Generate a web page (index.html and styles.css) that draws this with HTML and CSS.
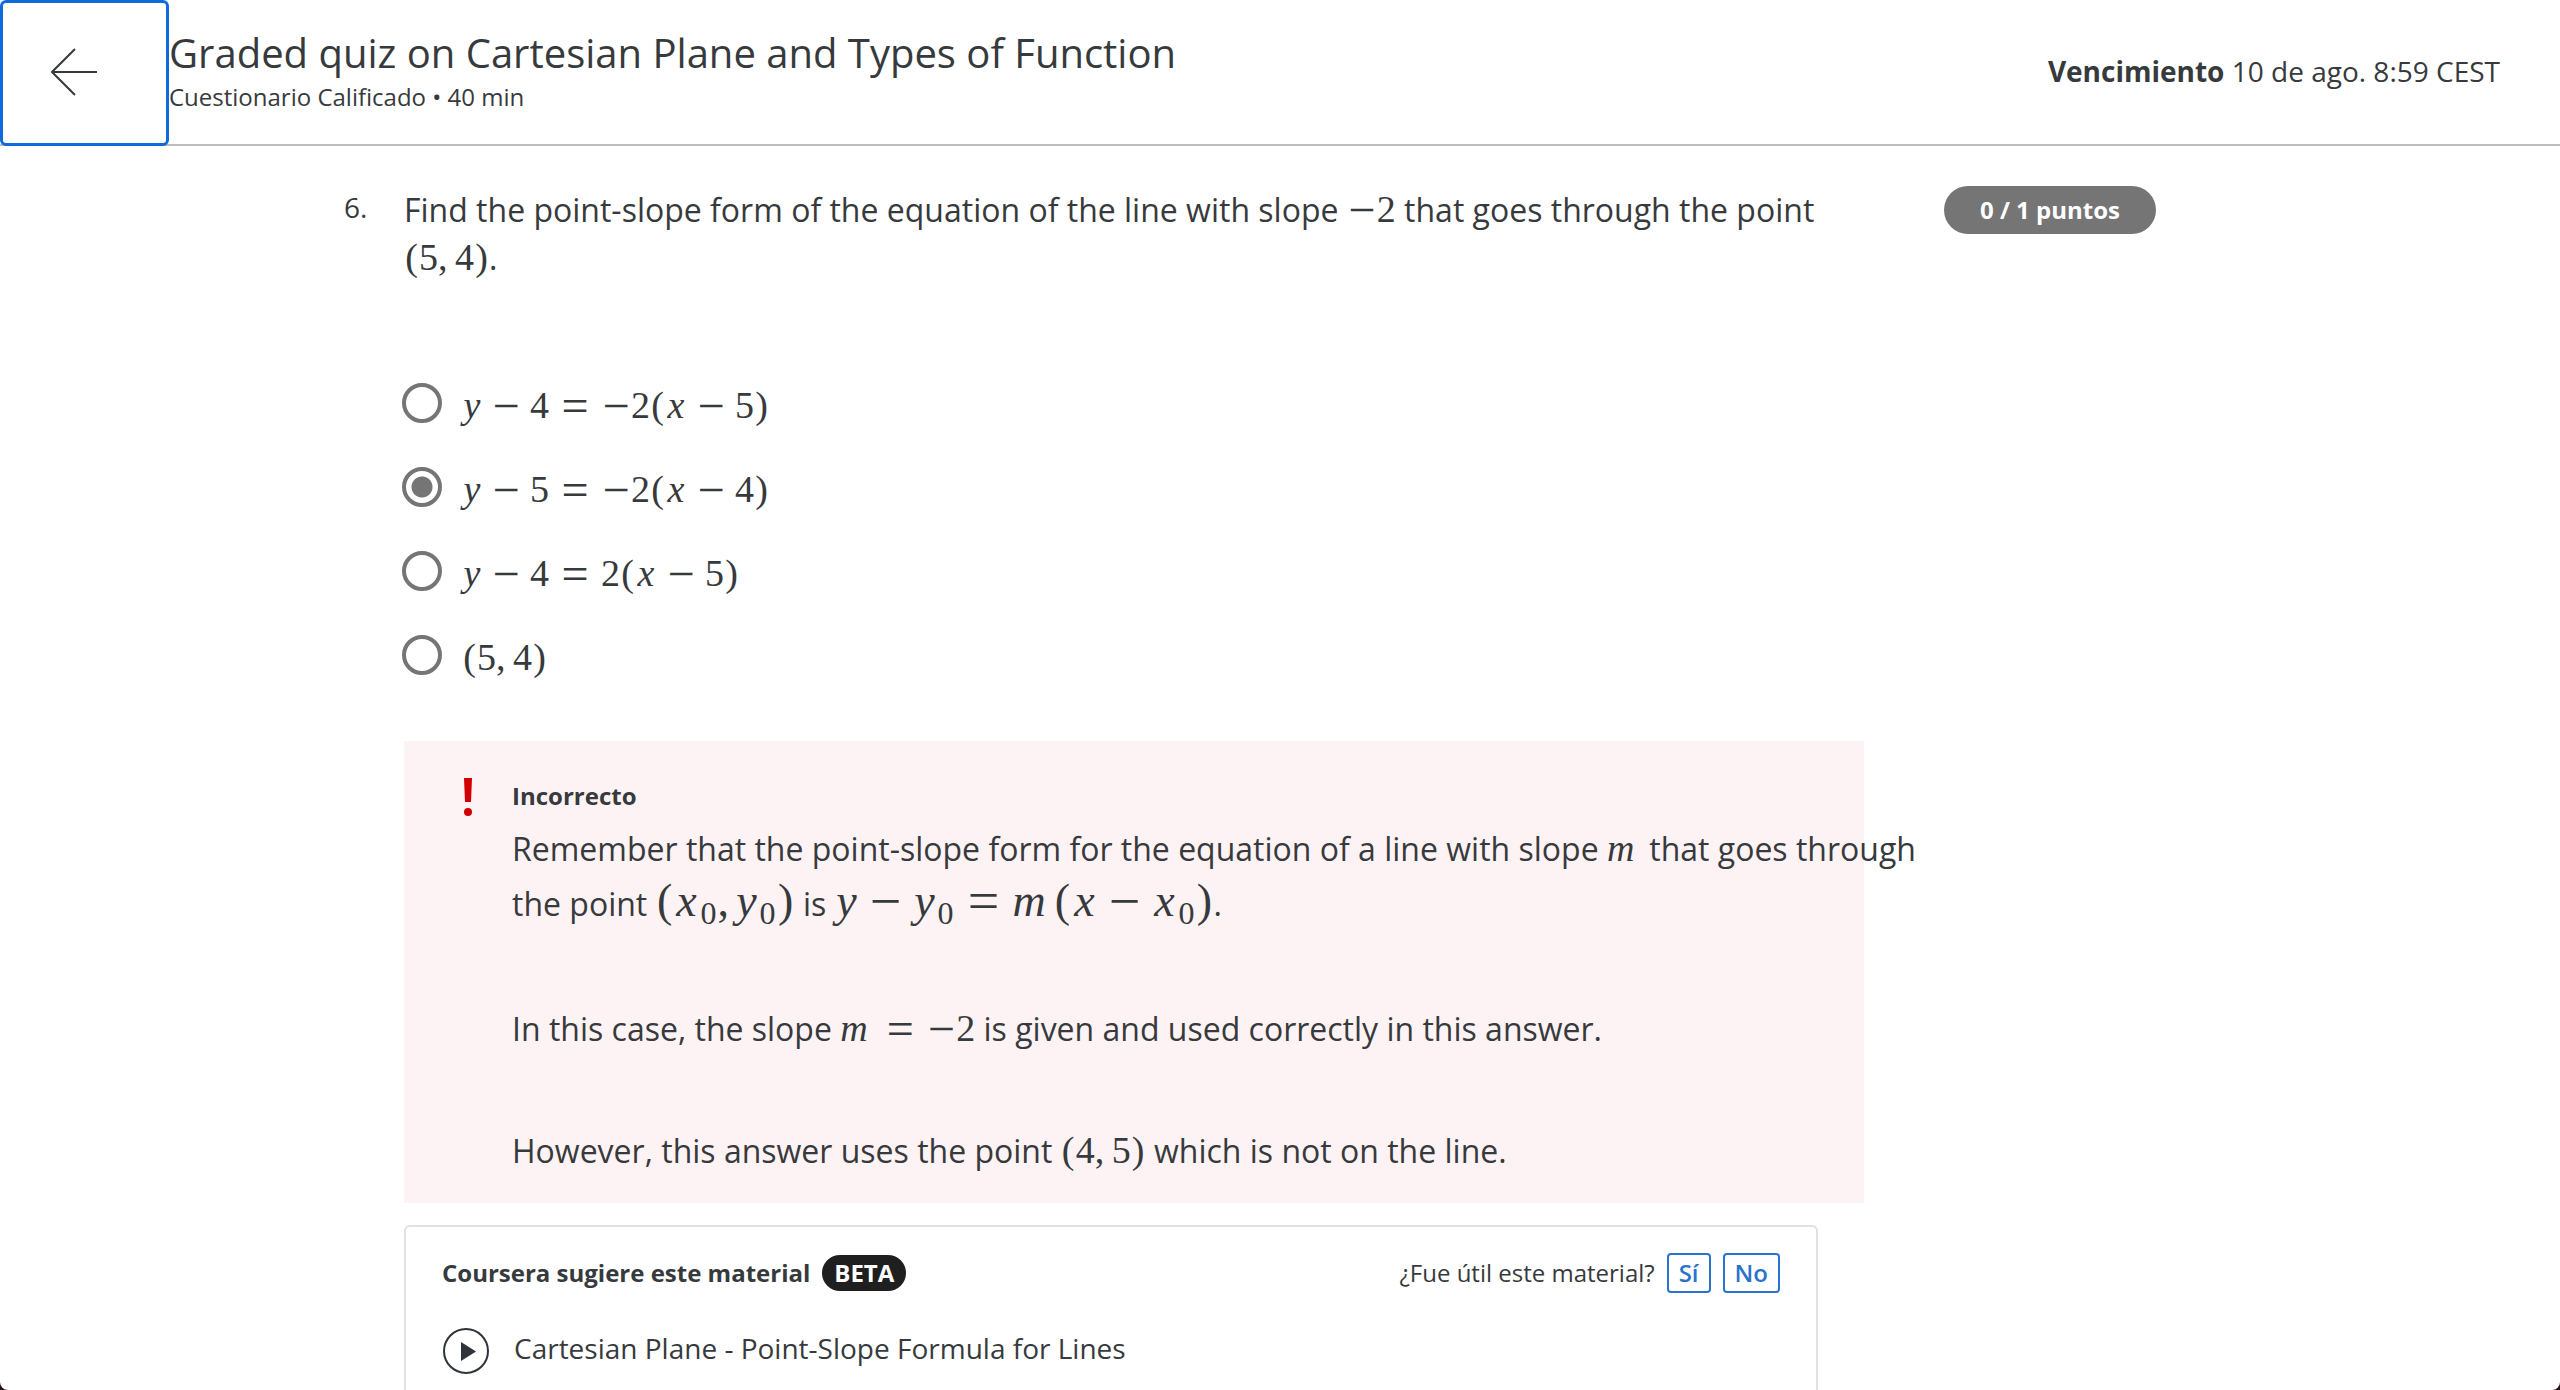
FILE: index.html
```html
<!DOCTYPE html>
<html lang="es">
<head>
<meta charset="utf-8">
<title>Graded quiz on Cartesian Plane and Types of Function</title>
<link rel="stylesheet" href="styles.css">
</head>
<body>
<div class="page">
  <header class="topbar">
    <button class="back" type="button" aria-label="Volver">
      <svg width="46" height="48" viewBox="0 0 46 48" fill="none" stroke="#373a3c" stroke-width="2" aria-hidden="true"><path d="M46 24H1M24 1 1 24l23 23"/></svg>
    </button>
    <div class="heading">
      <h1 class="title">Graded quiz on Cartesian Plane and Types of Function</h1>
      <p class="subtitle">Cuestionario Calificado • 40 min</p>
    </div>
    <p class="due"><strong>Vencimiento</strong> 10 de ago. 8:59 CEST</p>
  </header>

  <main class="question">
    <div class="number">6.</div>
    <div class="body">
      <p class="prompt">Find the point-slope form of the equation of the line with slope <span class="math"><span class="sign">−</span>2</span> that goes through the point <span class="math"><span class="paren">(</span>5<span class="comma">,</span>4<span class="paren">)</span></span>.</p>

      <div class="options" role="radiogroup" aria-label="Respuesta">
        <label class="option"><input class="radio" type="radio" name="answer"><span class="math"><i class="y">y</i><span class="sign bin">−</span>4<span class="sign rel">=</span><span class="sign">−</span>2<span class="paren">(</span><i class="x">x</i><span class="sign bin">−</span>5<span class="paren">)</span></span></label>
        <label class="option"><input class="radio" type="radio" name="answer" checked><span class="math"><i class="y">y</i><span class="sign bin">−</span>5<span class="sign rel">=</span><span class="sign">−</span>2<span class="paren">(</span><i class="x">x</i><span class="sign bin">−</span>4<span class="paren">)</span></span></label>
        <label class="option"><input class="radio" type="radio" name="answer"><span class="math"><i class="y">y</i><span class="sign bin">−</span>4<span class="sign rel">=</span>2<span class="paren">(</span><i class="x">x</i><span class="sign bin">−</span>5<span class="paren">)</span></span></label>
        <label class="option"><input class="radio" type="radio" name="answer"><span class="math"><span class="paren">(</span>5<span class="comma">,</span>4<span class="paren">)</span></span></label>
      </div>

      <section class="feedback">
        <svg class="alert" width="10" height="38" viewBox="0 0 10 38" fill="#d30001" aria-hidden="true"><path d="M0 0h8L7 24H1z"/><circle cx="4" cy="34" r="4"/></svg>
        <div class="feedback-text">
          <h2 class="verdict">Incorrecto</h2>
          <p class="rule">Remember that the point-slope form for the equation of a line with slope <span class="math"><i class="m">m</i></span> that goes through the point <span class="math large"><span class="paren">(</span><i class="x">x</i><span class="sub">0</span><span class="comma">,</span><i class="y">y</i><span class="sub">0</span><span class="paren">)</span></span> is <span class="math large"><i class="y">y</i><span class="sign bin">−</span><i class="y">y</i><span class="sub">0</span><span class="sign rel">=</span><i class="m">m</i><span class="paren">(</span><i class="x">x</i><span class="sign bin">−</span><i class="x">x</i><span class="sub">0</span><span class="paren">)</span></span>.</p>
          <p class="note">In this case, the slope <span class="math"><i class="m">m</i><span class="sign rel">=</span><span class="sign">−</span>2</span> is given and used correctly in this answer.</p>
          <p class="note">However, this answer uses the point <span class="math"><span class="paren">(</span>4<span class="comma">,</span>5<span class="paren">)</span></span> which is not on the line.</p>
        </div>
      </section>

      <section class="suggestion">
        <div class="suggestion-head">
          <h2 class="suggestion-title">Coursera sugiere este material</h2>
          <span class="beta">BETA</span>
          <span class="ask">¿Fue útil este material?</span>
          <button class="vote" type="button">Sí</button>
          <button class="vote" type="button">No</button>
        </div>
        <div class="material">
          <svg width="46" height="46" viewBox="0 0 46 46" aria-hidden="true"><circle cx="23" cy="23" r="22" fill="none" stroke="#2f343a" stroke-width="2"/><path d="M18 14v19l15-9.500z" fill="#2f343a"/></svg>
          <div>
            <a class="material-link" href="#">Cartesian Plane - Point-Slope Formula for Lines</a>
            <p class="material-kind">Vídeo</p>
          </div>
        </div>
      </section>
    </div>
    <div class="points">0 / 1 puntos</div>
  </main>
</div>
</body>
</html>
```
FILE: styles.css
```css
* {
  box-sizing: border-box;
}

html {
  background: #1f1412;
}

body {
  margin: 0;
  font-family: "Open Sans", "Noto Sans", sans-serif;
  font-size: 32px;
  line-height: 48px;
  color: #373a3c;
}

h1,
h2,
p {
  margin: 0;
}

.page {
  height: 100vh;
  overflow: hidden;
  background: #fff;
  border-radius: 0 0 8px 8px;
}

/* Top bar */
.topbar {
  display: flex;
  align-items: flex-start;
  height: 146px;
  border-bottom: 2px solid #bdbdbd;
}

.back {
  display: flex;
  align-items: center;
  flex: none;
  width: 169px;
  height: 146px;
  padding: 0 0 2px 48px;
  border: 3px solid #0f6bdb;
  border-radius: 6px;
  background: #fff;
}

.heading {
  padding-top: 25px;
}

.title {
  font-size: 40px;
  font-weight: 400;
  line-height: 56px;
}

.subtitle {
  font-size: 24px;
  line-height: 32px;
}

.due {
  margin-left: auto;
  padding: 47px 60px 0 0;
  font-size: 28px;
}

/* Question */
.question {
  display: grid;
  grid-template-columns: 60px minmax(0, 1fr) 338px;
  align-items: start;
  padding: 40px 404px 0 344px;
}

.number {
  font-size: 28px;
  line-height: 42px;
}

.points {
  justify-self: end;
  padding: 0 36px;
  border-radius: 24px;
  background: #757575;
  color: #fff;
  font-size: 24px;
  font-weight: 700;
}

/* Formulas */
.math {
  display: inline-block;
  font-family: "Liberation Serif", serif;
  font-size: 38px;
  line-height: 38px;
  white-space: nowrap;
}

.math > span,
.math > i {
  display: inline-block;
  text-align: center;
}

.math > .sign {
  width: 30px;
  font-size: 48px;
  line-height: 30px;
  vertical-align: -4px;
}

.bin {
  margin: 0 9px;
}

.rel {
  margin: 0 11px;
}

.paren {
  width: 15px;
}

.comma {
  width: 17px;
}

.math > .comma,
.math > .m {
  text-align: left;
}

.y {
  width: 20px;
}

.x {
  width: 22px;
}

.m {
  width: 34px;
}

.large {
  font-size: 46px;
}

.large > .sign {
  width: 36px;
  font-size: 56px;
}

.large .paren {
  width: 18px;
}

.large .y {
  width: 24px;
}

.large .x {
  width: 26px;
}

.large .m {
  width: 41px;
}

.sub {
  width: 18px;
  font-size: 32px;
  line-height: 24px;
  vertical-align: -8px;
}

/* Options */
.options {
  margin: 79px 0 44px -2px;
}

.option {
  display: flex;
  align-items: center;
  gap: 20px;
  height: 84px;
}

.option .math {
  padding-top: 4px;
}

.radio {
  appearance: none;
  flex: none;
  width: 40px;
  height: 40px;
  margin: 0;
  border: 4px solid #757575;
  border-radius: 50%;
}

.radio:checked {
  background: radial-gradient(circle, #757575 10px, #fff 11px);
}

/* Feedback */
.feedback {
  display: grid;
  grid-template-columns: 48px minmax(0, 1fr);
  margin-right: -46px;
  padding: 37px 0 28px 60px;
  background: #fef3f4;
}

.feedback-text {
  margin-right: -62px;
}

.verdict {
  font-size: 24px;
  line-height: 36px;
}

.rule {
  margin-top: 7px;
  line-height: 55px;
}

.note {
  margin-top: 74px;
}

/* Suggested material */
.suggestion {
  margin-top: 22px;
  padding: 26px 36px;
  border: 2px solid #e1e1e1;
  border-radius: 6px;
}

.suggestion-head {
  display: flex;
  align-items: center;
  gap: 12px;
  font-size: 24px;
  line-height: 36px;
}

.suggestion-title {
  font-size: 24px;
}

.beta {
  padding: 0 12px;
  border-radius: 18px;
  background: #1f1f1f;
  color: #fff;
  font-weight: 700;
}

.ask {
  margin-left: auto;
}

.vote {
  height: 40px;
  padding: 0 10px;
  border: 2px solid #2a73cc;
  border-radius: 4px;
  background: #fff;
  color: #2a73cc;
  font: 600 24px/36px "Open Sans", "Noto Sans", sans-serif;
}

.material {
  display: flex;
  align-items: flex-start;
  gap: 25px;
  margin-top: 35px;
  padding-left: 1px;
}

.material-link {
  display: block;
  color: inherit;
  font-size: 28px;
  line-height: 40px;
  text-decoration: none;
}

.material-kind {
  margin-top: 14px;
  color: #757575;
  font-size: 24px;
  line-height: 36px;
}
```
